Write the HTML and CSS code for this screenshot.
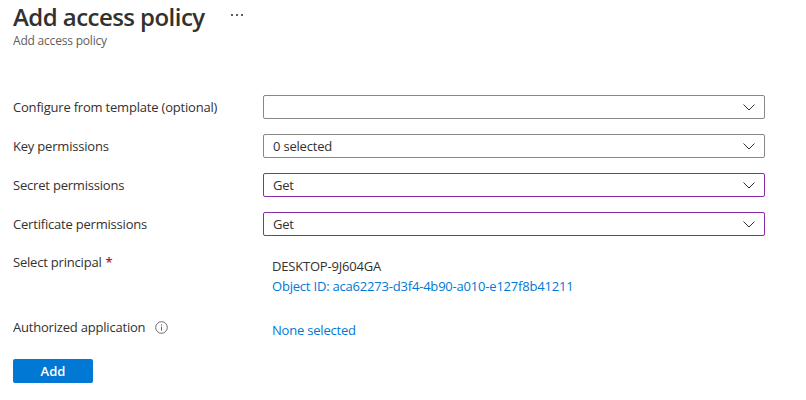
FILE: index.html
```html
<!DOCTYPE html>
<html lang="en">
<head>
<meta charset="utf-8">
<title>Add access policy</title>
<link rel="stylesheet" href="styles.css">
</head>
<body>
<div class="page">
  <header class="header">
    <div class="title-row">
      <h1 class="title">Add access policy</h1>
      <span class="more" aria-label="More"><i></i><i></i><i></i></span>
    </div>
    <div class="subtitle">Add access policy</div>
  </header>

  <form class="form">
    <div class="row">
      <label class="label">Configure from template (optional)</label>
      <div class="select"><span class="value"></span><svg class="chev" width="12" height="7" viewBox="0 0 12 7"><path d="M0.5 0.5 L6 6 L11.5 0.5" fill="none" stroke="#323130" stroke-width="1"/></svg></div>
    </div>
    <div class="row">
      <label class="label">Key permissions</label>
      <div class="select"><span class="value">0 selected</span><svg class="chev" width="12" height="7" viewBox="0 0 12 7"><path d="M0.5 0.5 L6 6 L11.5 0.5" fill="none" stroke="#323130" stroke-width="1"/></svg></div>
    </div>
    <div class="row">
      <label class="label">Secret permissions</label>
      <div class="select active"><span class="value">Get</span><svg class="chev" width="12" height="7" viewBox="0 0 12 7"><path d="M0.5 0.5 L6 6 L11.5 0.5" fill="none" stroke="#323130" stroke-width="1"/></svg></div>
    </div>
    <div class="row">
      <label class="label">Certificate permissions</label>
      <div class="select active"><span class="value">Get</span><svg class="chev" width="12" height="7" viewBox="0 0 12 7"><path d="M0.5 0.5 L6 6 L11.5 0.5" fill="none" stroke="#323130" stroke-width="1"/></svg></div>
    </div>
    <div class="row principal">
      <label class="label">Select principal <span class="req">*</span></label>
      <div class="info-value">
        <div class="name">DESKTOP-9J604GA</div>
        <a class="link">Object ID: aca62273-d3f4-4b90-a010-e127f8b41211</a>
      </div>
    </div>
    <div class="row app">
      <label class="label">Authorized application <svg class="info" width="13" height="13" viewBox="0 0 13 13"><circle cx="6.5" cy="6.5" r="5.8" fill="none" stroke="#605e5c" stroke-width="0.9"/><circle cx="6.5" cy="3.9" r="0.7" fill="#605e5c"/><path d="M6.5 5.6 V9.6" stroke="#605e5c" stroke-width="1"/></svg></label>
      <div class="info-value"><a class="link">None selected</a></div>
    </div>
    <div class="actions">
      <button type="button" class="btn">Add</button>
    </div>
  </form>
</div>
</body>
</html>
```

FILE: styles.css
```css
* { box-sizing: border-box; }

html, body {
  margin: 0;
  background: #ffffff;
}

body {
  font-family: "Segoe UI", "Open Sans", "Noto Sans", sans-serif;
  color: #323130;
  font-size: 13px;
  letter-spacing: -0.2px;
}

.page {
  padding: 0 13px;
}

.title-row {
  display: flex;
  align-items: center;
  gap: 26px;
  height: 33px;
}

.title {
  margin: 0;
  font-size: 24px;
  font-weight: 600;
  line-height: 33px;
  letter-spacing: -0.55px;
  color: #323130;
}

.more {
  display: flex;
  gap: 3px;
  align-items: center;
  margin-top: -4px;
}

.more i {
  display: block;
  width: 2px;
  height: 2px;
  background: #605e5c;
}

.subtitle {
  font-size: 12px;
  line-height: 16px;
  color: #605e5c;
}

.form {
  margin-top: 46px;
  display: flex;
  flex-direction: column;
}

.row {
  display: grid;
  grid-template-columns: 250px 502px;
  align-items: center;
  margin-bottom: 15px;
}

.label {
  font-size: 13px;
  line-height: 20px;
  color: #323130;
  display: flex;
  align-items: center;
  gap: 4px;
}

.select {
  height: 24px;
  border: 1px solid #8a8886;
  border-radius: 2px;
  display: flex;
  align-items: center;
  justify-content: space-between;
  padding: 0 9px 0 9px;
}

.select.active {
  border-color: #8a2da5;
}

.value {
  font-size: 13px;
  color: #323130;
}

.chev {
  display: block;
}

.req {
  color: #a4262c;
  font-weight: 600;
}

.principal {
  align-items: start;
  margin-top: 1px;
  margin-bottom: 18px;
}

.info-value {
  padding-left: 9px;
  display: flex;
  flex-direction: column;
  line-height: 20px;
}

.principal .info-value {
  padding-top: 4px;
}

.name {
  color: #323130;
}

.link {
  color: #0078d4;
  text-decoration: none;
}

.app .info-value {
  padding-top: 6px;
}

.info {
  margin-left: 6px;
  display: block;
}

.actions {
  margin-top: 4px;
}

.btn {
  width: 80px;
  height: 24px;
  background: #0078d4;
  color: #ffffff;
  border: 0;
  border-radius: 2px;
  font-family: inherit;
  font-size: 13px;
  font-weight: 600;
  padding: 0;
}
```
